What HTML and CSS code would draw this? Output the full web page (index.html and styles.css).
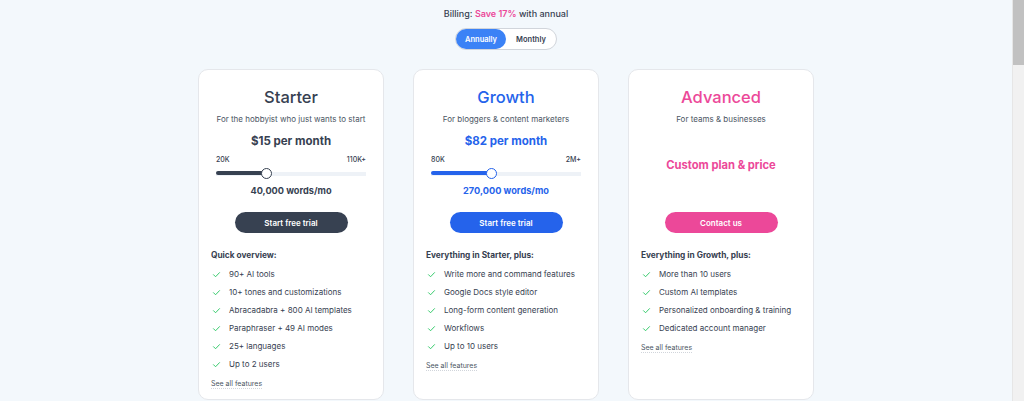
FILE: index.html
```html
<!DOCTYPE html>
<html lang="en">
<head>
  <meta charset="UTF-8" />
  <meta name="viewport" content="width=device-width, initial-scale=1" />
  <title>Pricing</title>
  <link rel="stylesheet" href="styles.css">
</head>
<body>
  <main id="pricing-page">
    <p class="billing-note">Billing: <span class="save">Save 17%</span> with annual</p>

    <div class="billing-toggle" role="group" aria-label="Billing period">
      <button class="toggle-btn active">Annually</button>
      <button class="toggle-btn">Monthly</button>
    </div>

    <section class="plans">
      <!-- Starter -->
      <article class="plan plan-starter">
        <h2 class="plan-name">Starter</h2>
        <p class="plan-desc">For the hobbyist who just wants to start</p>
        <div class="plan-price">
          <div class="price">$15 per month</div>
          <div class="range-labels"><span>20K</span><span>110K+</span></div>
          <div class="slider">
            <div class="slider-fill" style="width: 33.5%"></div>
            <div class="slider-thumb" style="left: 33.5%"></div>
          </div>
          <div class="words">40,000 words/mo</div>
        </div>
        <button class="cta">Start free trial</button>
        <h3 class="features-title">Quick overview:</h3>
        <ul class="features">
          <li><svg viewBox="0 0 24 24"><polyline points="4 12.5 9.5 18 20 7"/></svg>90+ AI tools</li>
          <li><svg viewBox="0 0 24 24"><polyline points="4 12.5 9.5 18 20 7"/></svg>10+ tones and customizations</li>
          <li><svg viewBox="0 0 24 24"><polyline points="4 12.5 9.5 18 20 7"/></svg>Abracadabra + 800 AI templates</li>
          <li><svg viewBox="0 0 24 24"><polyline points="4 12.5 9.5 18 20 7"/></svg>Paraphraser + 49 AI modes</li>
          <li><svg viewBox="0 0 24 24"><polyline points="4 12.5 9.5 18 20 7"/></svg>25+ languages</li>
          <li><svg viewBox="0 0 24 24"><polyline points="4 12.5 9.5 18 20 7"/></svg>Up to 2 users</li>
        </ul>
        <a class="see-all" href="#">See all features</a>
      </article>

      <!-- Growth -->
      <article class="plan plan-growth">
        <h2 class="plan-name">Growth</h2>
        <p class="plan-desc">For bloggers &amp; content marketers</p>
        <div class="plan-price">
          <div class="price">$82 per month</div>
          <div class="range-labels"><span>80K</span><span>2M+</span></div>
          <div class="slider">
            <div class="slider-fill" style="width: 40%"></div>
            <div class="slider-thumb" style="left: 40%"></div>
          </div>
          <div class="words">270,000 words/mo</div>
        </div>
        <button class="cta">Start free trial</button>
        <h3 class="features-title">Everything in Starter, plus:</h3>
        <ul class="features">
          <li><svg viewBox="0 0 24 24"><polyline points="4 12.5 9.5 18 20 7"/></svg>Write more and command features</li>
          <li><svg viewBox="0 0 24 24"><polyline points="4 12.5 9.5 18 20 7"/></svg>Google Docs style editor</li>
          <li><svg viewBox="0 0 24 24"><polyline points="4 12.5 9.5 18 20 7"/></svg>Long-form content generation</li>
          <li><svg viewBox="0 0 24 24"><polyline points="4 12.5 9.5 18 20 7"/></svg>Workflows</li>
          <li><svg viewBox="0 0 24 24"><polyline points="4 12.5 9.5 18 20 7"/></svg>Up to 10 users</li>
        </ul>
        <a class="see-all" href="#">See all features</a>
      </article>

      <!-- Advanced -->
      <article class="plan plan-advanced">
        <h2 class="plan-name">Advanced</h2>
        <p class="plan-desc">For teams &amp; businesses</p>
        <div class="plan-price custom">
          <div class="price">Custom plan &amp; price</div>
        </div>
        <button class="cta">Contact us</button>
        <h3 class="features-title">Everything in Growth, plus:</h3>
        <ul class="features">
          <li><svg viewBox="0 0 24 24"><polyline points="4 12.5 9.5 18 20 7"/></svg>More than 10 users</li>
          <li><svg viewBox="0 0 24 24"><polyline points="4 12.5 9.5 18 20 7"/></svg>Custom AI templates</li>
          <li><svg viewBox="0 0 24 24"><polyline points="4 12.5 9.5 18 20 7"/></svg>Personalized onboarding &amp; training</li>
          <li><svg viewBox="0 0 24 24"><polyline points="4 12.5 9.5 18 20 7"/></svg>Dedicated account manager</li>
        </ul>
        <a class="see-all" href="#">See all features</a>
      </article>
    </section>
  </main>

  <!-- window scrollbar as seen in the capture -->
  <div class="scrollbar" aria-hidden="true"><div class="scrollbar-thumb"></div></div>
</body>
</html>
```

FILE: styles.css
```css
body {
  margin: 0;
  font-family: Inter, 'Noto Sans', sans-serif;
  background: #f3f8fc;
  color: #374151;
  display: flex;
  align-items: flex-start;
}

#pricing-page {
  flex: 1;
  display: flex;
  flex-direction: column;
  align-items: center;
  padding-top: 8px;
}

.scrollbar {
  position: sticky;
  top: 0;
  width: 11px;
  height: 100vh;
  background: #f1f1f1;
  border-left: 1px solid #e6e6e6;
}
.scrollbar-thumb {
  height: 65px;
  background: #c1c1c1;
}

.billing-note {
  margin: 0;
  font-size: 9px;
  line-height: 12px;
  font-weight: 500;
  color: #374151;
}
.billing-note .save {
  color: #ec4899;
  font-weight: 600;
}

.billing-toggle {
  display: flex;
  margin-top: 8px;
  background: #fff;
  border: 1px solid #d1d5db;
  border-radius: 999px;
}
.toggle-btn {
  width: 50px;
  height: 20px;
  border: none;
  border-radius: 999px;
  background: transparent;
  font-family: inherit;
  font-size: 7.5px;
  font-weight: 600;
  color: #374151;
  padding: 0;
  cursor: pointer;
}
.toggle-btn.active {
  background: #3b82f6;
  color: #fff;
}

.plans {
  display: flex;
  gap: 29px;
  margin-top: 19px;
}

.plan {
  box-sizing: border-box;
  width: 186px;
  min-height: 330px;
  padding: 16px 12px 10px;
  background: #fff;
  border: 1px solid #e5e7eb;
  border-radius: 10px;
  display: flex;
  flex-direction: column;
}

.plan-name {
  margin: 0;
  text-align: center;
  font-size: 16.5px;
  line-height: 22px;
  font-weight: 500;
}
.plan-desc {
  margin: 5px 0 0;
  text-align: center;
  font-size: 8px;
  line-height: 12px;
  color: #4b5563;
}

.plan-price {
  margin-top: 8px;
  height: 65px;
  display: flex;
  flex-direction: column;
}
.plan-price.custom {
  justify-content: center;
  box-sizing: border-box;
  padding-bottom: 2px;
}
.price {
  text-align: center;
  font-size: 11.5px;
  line-height: 16px;
  font-weight: 700;
}
.plan-price.custom .price {
  font-size: 11.2px;
}
.range-labels {
  display: flex;
  justify-content: space-between;
  margin: 6px 5px 0;
  font-size: 7px;
  line-height: 10px;
  font-weight: 500;
}
.slider {
  position: relative;
  margin: 2.5px 5px 0;
  height: 4px;
  padding: 3.5px 0;
  background: #eef2f7 content-box;
  border-radius: 2px;
}
.slider-fill {
  height: 4px;
  border-radius: 2px;
  background: #374151;
}
.slider-thumb {
  position: absolute;
  top: 0;
  width: 11px;
  height: 11px;
  box-sizing: border-box;
  margin-left: -5.5px;
  border-radius: 50%;
  background: #fff;
  border: 1.5px solid #374151;
}
.words {
  margin-top: 5.5px;
  text-align: center;
  font-size: 9.2px;
  line-height: 14px;
  font-weight: 700;
}

.cta {
  align-self: center;
  margin-top: 14px;
  width: 113px;
  height: 21px;
  border: none;
  border-radius: 999px;
  background: #374151;
  color: #fff;
  font-family: inherit;
  font-size: 8px;
  font-weight: 600;
  cursor: pointer;
}

.features-title {
  margin: 16px 0 0;
  font-size: 8.3px;
  line-height: 12px;
  font-weight: 700;
}
.features {
  list-style: none;
  margin: 7px 0 0;
  padding: 0;
  display: flex;
  flex-direction: column;
  gap: 6px;
}
.features li {
  display: flex;
  align-items: center;
  gap: 8px;
  font-size: 8px;
  line-height: 12px;
  white-space: nowrap;
  color: #374151;
}
.features svg {
  flex: none;
  width: 9px;
  height: 9px;
  margin-left: 1px;
  fill: none;
  stroke: #22c55e;
  stroke-width: 2.4;
  stroke-linecap: round;
  stroke-linejoin: round;
}

.see-all {
  align-self: flex-start;
  margin-top: 9px;
  font-size: 7px;
  line-height: 9px;
  color: #4b5563;
  text-decoration: none;
  border-bottom: 1px dotted #d1d5db;
}

/* plan colours */
.plan-starter .plan-name,
.plan-starter .price,
.plan-starter .words { color: #374151; }

.plan-growth .plan-name,
.plan-growth .price,
.plan-growth .words { color: #2563eb; }
.plan-growth .slider-fill { background: #2563eb; }
.plan-growth .slider-thumb { border-color: #2563eb; }
.plan-growth .cta { background: #2563eb; }

.plan-advanced .plan-name,
.plan-advanced .price { color: #ec4899; }
.plan-advanced .cta { background: #ec4899; }
```
